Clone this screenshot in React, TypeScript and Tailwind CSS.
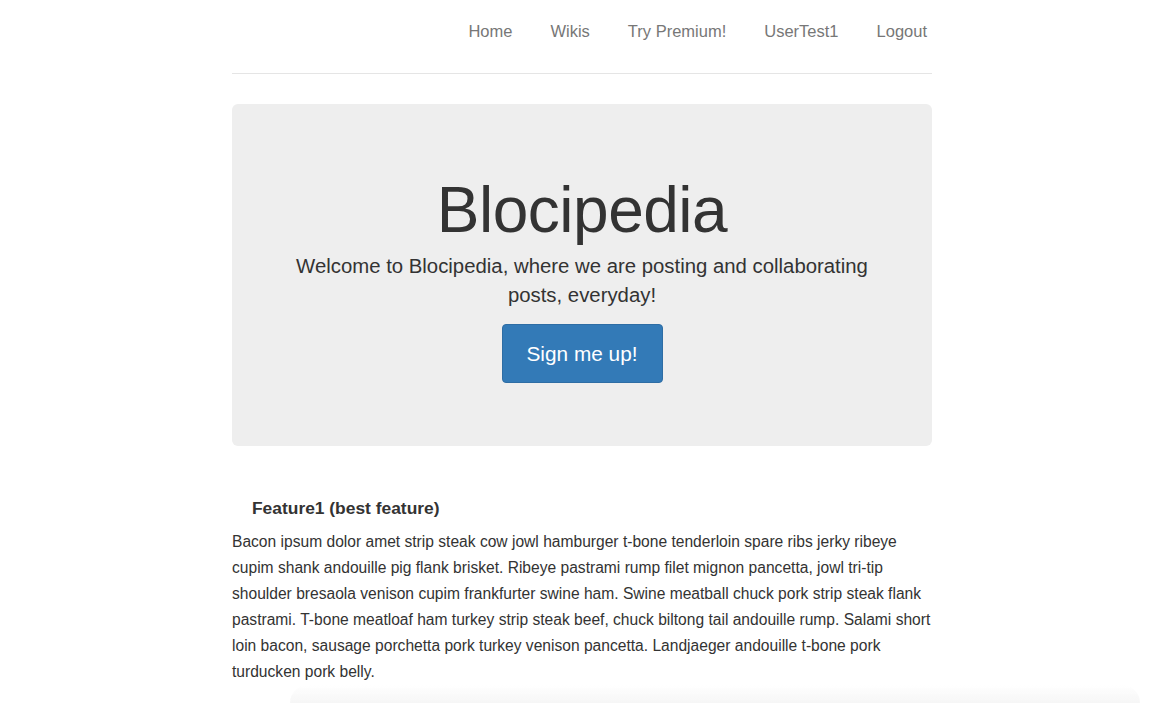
const navLinks = ["Home", "Wikis", "Try Premium!", "UserTest1", "Logout"];

export default function App() {
    return (
        <div className="min-h-[703px] bg-white pl-[4px] font-['Liberation_Sans',Arial,sans-serif] text-[#333]">
            <div className="mx-auto w-[700px]">
                <nav className="flex h-[74px] items-start justify-end border-b border-[#e5e5e5] pr-[5px] pt-[21px]">
                    <ul className="flex gap-[38px] text-[16.5px] leading-[20px] text-[#777]">
                        {navLinks.map((link) => (
                            <li key={link}>
                                <a href="#">{link}</a>
                            </li>
                        ))}
                    </ul>
                </nav>

                <div className="mt-[30px] flex h-[342px] flex-col items-center rounded-[6px] bg-[#eee] px-[60px] pt-[72px] text-center">
                    <h1 className="text-[64px] leading-[69px] tracking-[-0.5px]">Blocipedia</h1>
                    <p className="mt-[7px] text-[20.35px] leading-[29px]">
                        Welcome to Blocipedia, where we are posting and collaborating posts, everyday!
                    </p>
                    <a
                        href="#"
                        className="mt-[14px] flex h-[59px] w-[161px] items-center justify-center rounded-[4px] border border-[#2e6da4] bg-[#337ab7] text-[20.8px] text-white"
                    >
                        Sign me up!
                    </a>
                </div>

                <div className="mt-[50px]">
                    <h4 className="pl-[20px] text-[17.4px] font-bold leading-[24px]">Feature1 (best feature)</h4>
                    <p className="mt-[9px] w-[706px] text-[15.6px] leading-[26px]">
                        Bacon ipsum dolor amet strip steak cow jowl hamburger t-bone tenderloin spare ribs jerky ribeye
                        cupim shank andouille pig flank brisket. Ribeye pastrami rump filet mignon pancetta, jowl tri-tip
                        shoulder bresaola venison cupim frankfurter swine ham. Swine meatball chuck pork strip steak flank
                        pastrami. T-bone meatloaf ham turkey strip steak beef, chuck biltong tail andouille rump. Salami short
                        loin bacon, sausage porchetta pork turkey venison pancetta. Landjaeger andouille t-bone pork
                        turducken pork belly.
                    </p>
                </div>
            </div>
            <div className="pointer-events-none fixed bottom-0 left-[290px] right-[20px] h-[18px] rounded-t-[40px] bg-gradient-to-b from-transparent to-[#f6f6f6]" />
        </div>
    );
}
